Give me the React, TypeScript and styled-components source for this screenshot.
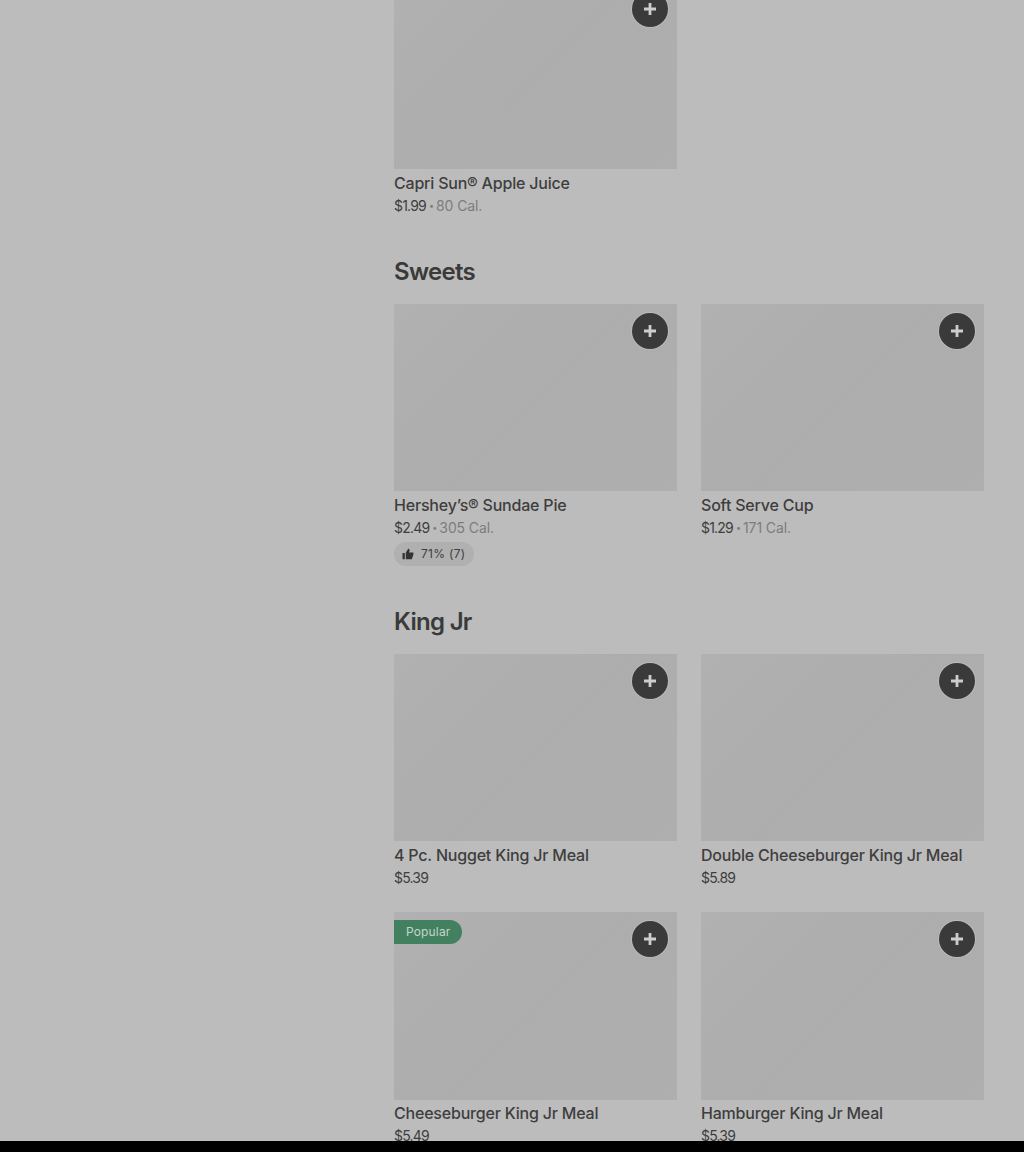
import styled, { createGlobalStyle } from 'styled-components';

const GlobalStyle = createGlobalStyle`
  html, body {
    margin: 0;
    padding: 0;
    background: #bcbcbc;
    font-family: Inter, "Liberation Sans", sans-serif;
  }
`;

const Screen = styled.div`
  display: flex;
  flex-direction: column;
  height: 1152px;
  overflow: hidden;
`;

const Viewport = styled.div`
  height: 1141px;
  overflow: hidden;
  background: #bcbcbc;
`;

const BottomBar = styled.div`
  height: 11px;
  background: #000;
`;

const Menu = styled.main`
  display: flex;
  flex-direction: column;
  gap: 40px;
  width: 590px;
  margin: -18.3px 0 0 394px;
`;

const Section = styled.section`
  display: flex;
  flex-direction: column;
`;

const SectionTitle = styled.h2`
  margin: 0 0 16px;
  font-size: 24px;
  line-height: 32px;
  font-weight: 600;
  letter-spacing: -0.7px;
  color: #3a3a3a;
`;

const Grid = styled.div`
  display: grid;
  grid-template-columns: 283px 283px;
  column-gap: 24px;
  row-gap: 24.3px;
`;

const Card = styled.article`
  display: flex;
  flex-direction: column;
`;

const Photo = styled.div`
  position: relative;
  height: 187.5px;
  background: linear-gradient(135deg, #b1b1b1 0%, #adadad 50%, #afafaf 100%);
`;

const AddButton = styled.button`
  position: absolute;
  top: 9px;
  right: 9px;
  display: flex;
  align-items: center;
  justify-content: center;
  width: 36px;
  height: 36px;
  padding: 0;
  border: none;
  border-radius: 50%;
  background: #3a3a3a;
  box-shadow: 0 0 0 1px #bababa;
`;

const Badge = styled.span`
  position: absolute;
  top: 8px;
  left: 0;
  height: 24px;
  padding: 0 12px;
  border-radius: 0 12px 12px 0;
  background: #43805f;
  color: #c4d6cb;
  font-size: 12px;
  line-height: 24px;
  letter-spacing: 0.15px;
`;

const ItemName = styled.h3`
  margin: 3.5px 0 0;
  font-size: 16px;
  line-height: 20px;
  font-weight: 500;
  letter-spacing: -0.2px;
  color: #3e3e3e;
`;

const Meta = styled.div`
  display: flex;
  align-items: center;
  margin-top: 3px;
  font-size: 14px;
  line-height: 20px;
  color: #3e3e3e;
`;

const Price = styled.span`
  letter-spacing: -0.8px;
`;

const Separator = styled.span`
  margin: 0 2px 0 3px;
  font-size: 9px;
  color: #7c7c7c;
`;

const Calories = styled.span`
  color: #7c7c7c;
  letter-spacing: -0.1px;
`;

const Rating = styled.div`
  display: flex;
  align-items: center;
  gap: 7px;
  align-self: flex-start;
  height: 24px;
  margin-top: 4px;
  padding: 0 9px 0 8px;
  border-radius: 12px;
  background: #b0b0b0;
  color: #3e3e3e;
  font-size: 12px;
  letter-spacing: 0.3px;
`;

type Item = {
  name: string;
  price: string;
  cal?: string;
  rating?: string;
  popular?: boolean;
};

const kingJr: Item[] = [
  { name: '4 Pc. Nugget King Jr Meal', price: '$5.39' },
  { name: 'Double Cheeseburger King Jr Meal', price: '$5.89' },
  { name: 'Cheeseburger King Jr Meal', price: '$5.49', popular: true },
  { name: 'Hamburger King Jr Meal', price: '$5.39' },
];

const sweets: Item[] = [
  { name: 'Hershey’s® Sundae Pie', price: '$2.49', cal: '305 Cal.', rating: '71% (7)' },
  { name: 'Soft Serve Cup', price: '$1.29', cal: '171 Cal.' },
];

const PlusIcon = () => (
  <svg width="14" height="14" viewBox="0 0 14 14" aria-hidden="true">
    <path d="M5.6 1h2.8v4.6H13v2.8H8.4V13H5.6V8.4H1V5.6h4.6z" fill="#cdcdcd" />
  </svg>
);

const ThumbIcon = () => (
  <svg width="12" height="12" viewBox="0 0 12 12" aria-hidden="true">
    <path d="M0.5 5h2.3v6.2H0.5zM3.8 11.2V4.6L6.2 0.8c.9 0 1.4.6 1.4 1.4L7.2 4.4h4.2v2.2l-1.6 4.6z" fill="#333" />
  </svg>
);

function MenuCard({ item }: { item: Item }) {
  return (
    <Card>
      <Photo>
        {item.popular && <Badge>Popular</Badge>}
        <AddButton aria-label="Add">
          <PlusIcon />
        </AddButton>
      </Photo>
      <ItemName>{item.name}</ItemName>
      <Meta>
        <Price>{item.price}</Price>
        {item.cal && (
          <>
            <Separator>•</Separator>
            <Calories>{item.cal}</Calories>
          </>
        )}
      </Meta>
      {item.rating && (
        <Rating>
          <ThumbIcon />
          {item.rating}
        </Rating>
      )}
    </Card>
  );
}

export default function App() {
  return (
    <>
      <GlobalStyle />
      <Screen>
        <Viewport>
          <Menu>
            <Section>
              <Grid>
                <MenuCard item={{ name: 'Capri Sun® Apple Juice', price: '$1.99', cal: '80 Cal.' }} />
              </Grid>
            </Section>
            <Section>
              <SectionTitle>Sweets</SectionTitle>
              <Grid>
                {sweets.map((item) => (
                  <MenuCard key={item.name} item={item} />
                ))}
              </Grid>
            </Section>
            <Section>
              <SectionTitle>King Jr</SectionTitle>
              <Grid>
                {kingJr.map((item) => (
                  <MenuCard key={item.name} item={item} />
                ))}
              </Grid>
            </Section>
          </Menu>
        </Viewport>
        <BottomBar />
      </Screen>
    </>
  );
}
